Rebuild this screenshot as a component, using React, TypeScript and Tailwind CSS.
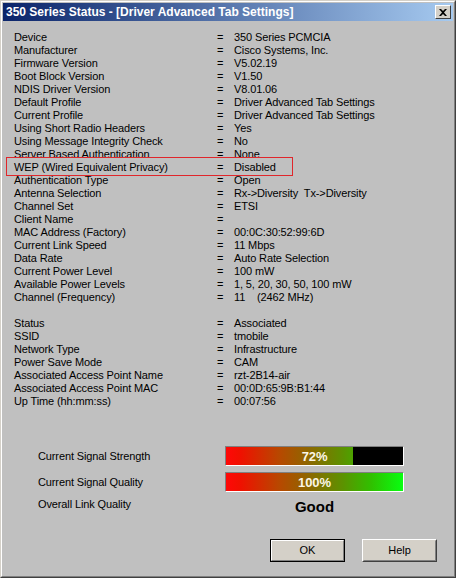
import React from "react";

const rows1: [string, string][] = [
  ["Device", "350 Series PCMCIA"],
  ["Manufacturer", "Cisco Systems, Inc."],
  ["Firmware Version", "V5.02.19"],
  ["Boot Block Version", "V1.50"],
  ["NDIS Driver Version", "V8.01.06"],
  ["Default Profile", "Driver Advanced Tab Settings"],
  ["Current Profile", "Driver Advanced Tab Settings"],
  ["Using Short Radio Headers", "Yes"],
  ["Using Message Integrity Check", "No"],
  ["Server Based Authentication", "None"],
  ["WEP (Wired Equivalent Privacy)", "Disabled"],
  ["Authentication Type", "Open"],
  ["Antenna Selection", "Rx->Diversity  Tx->Diversity"],
  ["Channel Set", "ETSI"],
  ["Client Name", ""],
  ["MAC Address (Factory)", "00:0C:30:52:99:6D"],
  ["Current Link Speed", "11 Mbps"],
  ["Data Rate", "Auto Rate Selection"],
  ["Current Power Level", "100 mW"],
  ["Available Power Levels", "1, 5, 20, 30, 50, 100 mW"],
  ["Channel (Frequency)", "11    (2462 MHz)"],
];

const rows2: [string, string][] = [
  ["Status", "Associated"],
  ["SSID", "tmobile"],
  ["Network Type", "Infrastructure"],
  ["Power Save Mode", "CAM"],
  ["Associated Access Point Name", "rzt-2B14-air"],
  ["Associated Access Point MAC", "00:0D:65:9B:B1:44"],
  ["Up Time (hh:mm:ss)", "00:07:56"],
];

function Row({ label, value, highlight }: { label: string; value: string; highlight?: boolean }) {
  return (
    <div className="relative grid grid-cols-[203px_17px_1fr] h-[13px] leading-[13px] whitespace-pre">
      <span>{label}</span>
      <span>=</span>
      <span>{value}</span>
      {highlight && (
        <div className="absolute left-[-8px] top-[-4px] w-[287px] h-[19px] border border-[#e0262b]" />
      )}
    </div>
  );
}

const signals = [
  { label: "Current Signal Strength", value: 72 },
  { label: "Current Signal Quality", value: 100 },
];

function Bar({ value }: { value: number }) {
  return (
    <div className="grid w-[179px] h-[20px] border border-t-[#808080] border-l-[#808080] border-b-white border-r-white">
      <div className="[grid-area:1/1] flex bg-[linear-gradient(to_right,#ff0808_0%,#f01000_8%,#b84800_30%,#8a6a00_48%,#5c9200_66%,#30c000_82%,#08ff10_100%)]">
        <div style={{ width: `${value}%` }} />
        <div className="flex-1 bg-black" />
      </div>
      <div className="[grid-area:1/1] flex items-center justify-center text-[13px] font-bold text-[#fbf6e6] leading-none">
        {value}%
      </div>
    </div>
  );
}

export default function App() {
  return (
    <div className="w-[456px] h-[578px] border border-t-[#d4d0c8] border-l-[#d4d0c8] border-b-[#404040] border-r-[#404040] font-['Liberation_Sans',Arial,sans-serif] text-black">
      <div className="w-full h-full border border-t-white border-l-white border-b-[#808080] border-r-[#808080] bg-[#c0c0c0] p-px flex flex-col">
        <div className="h-[18px] flex items-center justify-between pl-[3px] pr-[2px] bg-[linear-gradient(to_right,#0a246a,#a6caf0)]">
          <span className="text-white font-bold text-[12px] leading-none whitespace-nowrap">
            350 Series Status - [Driver Advanced Tab Settings]
          </span>
          <div className="w-[16px] h-[14px] bg-[#d4d0c8] border border-t-white border-l-white border-b-[#404040] border-r-[#404040] flex items-center justify-center">
            <svg width="8" height="7" viewBox="0 0 8 7">
              <path d="M0 0h2l2 2 2-2h2L5 3.5 8 7H6L4 5 2 7H0l3-3.5z" fill="#000" />
            </svg>
          </div>
        </div>
        <div className="pl-[11px] pt-[10px] text-[11px] tracking-[-0.12px]">
          {rows1.map(([l, v]) => (
            <Row key={l} label={l} value={v} highlight={l.startsWith("WEP")} />
          ))}
          <div className="h-[13px]" />
          {rows2.map(([l, v]) => (
            <Row key={l} label={l} value={v} />
          ))}
        </div>
        <div className="mt-[38px] pl-[35px] flex flex-col gap-[6px] text-[11px] tracking-[-0.12px]">
          {signals.map((s) => (
            <div key={s.label} className="grid grid-cols-[187px_179px] items-center">
              <span className="leading-[13px]">{s.label}</span>
              <Bar value={s.value} />
            </div>
          ))}
          <div className="grid grid-cols-[187px_179px] items-start mt-[-1px]">
            <span className="leading-[13px] pt-[1px]">Overall Link Quality</span>
            <span className="text-center font-bold text-[15px] leading-[20px] tracking-normal">Good</span>
          </div>
        </div>
        <div className="mt-[22px] flex justify-end gap-[17px] pr-[16px] text-[11px]">
          <button className="w-[75px] h-[23px] border border-black bg-[#d4d0c8]">
            <div className="w-full h-full border border-t-white border-l-white border-b-[#808080] border-r-[#808080] flex items-center justify-center">
              OK
            </div>
          </button>
          <button className="w-[75px] h-[23px] border border-t-white border-l-white border-b-[#404040] border-r-[#404040] bg-[#d4d0c8]">
            <div className="w-full h-full border border-t-[#d4d0c8] border-l-[#d4d0c8] border-b-[#808080] border-r-[#808080] flex items-center justify-center">
              Help
            </div>
          </button>
        </div>
      </div>
    </div>
  );
}
